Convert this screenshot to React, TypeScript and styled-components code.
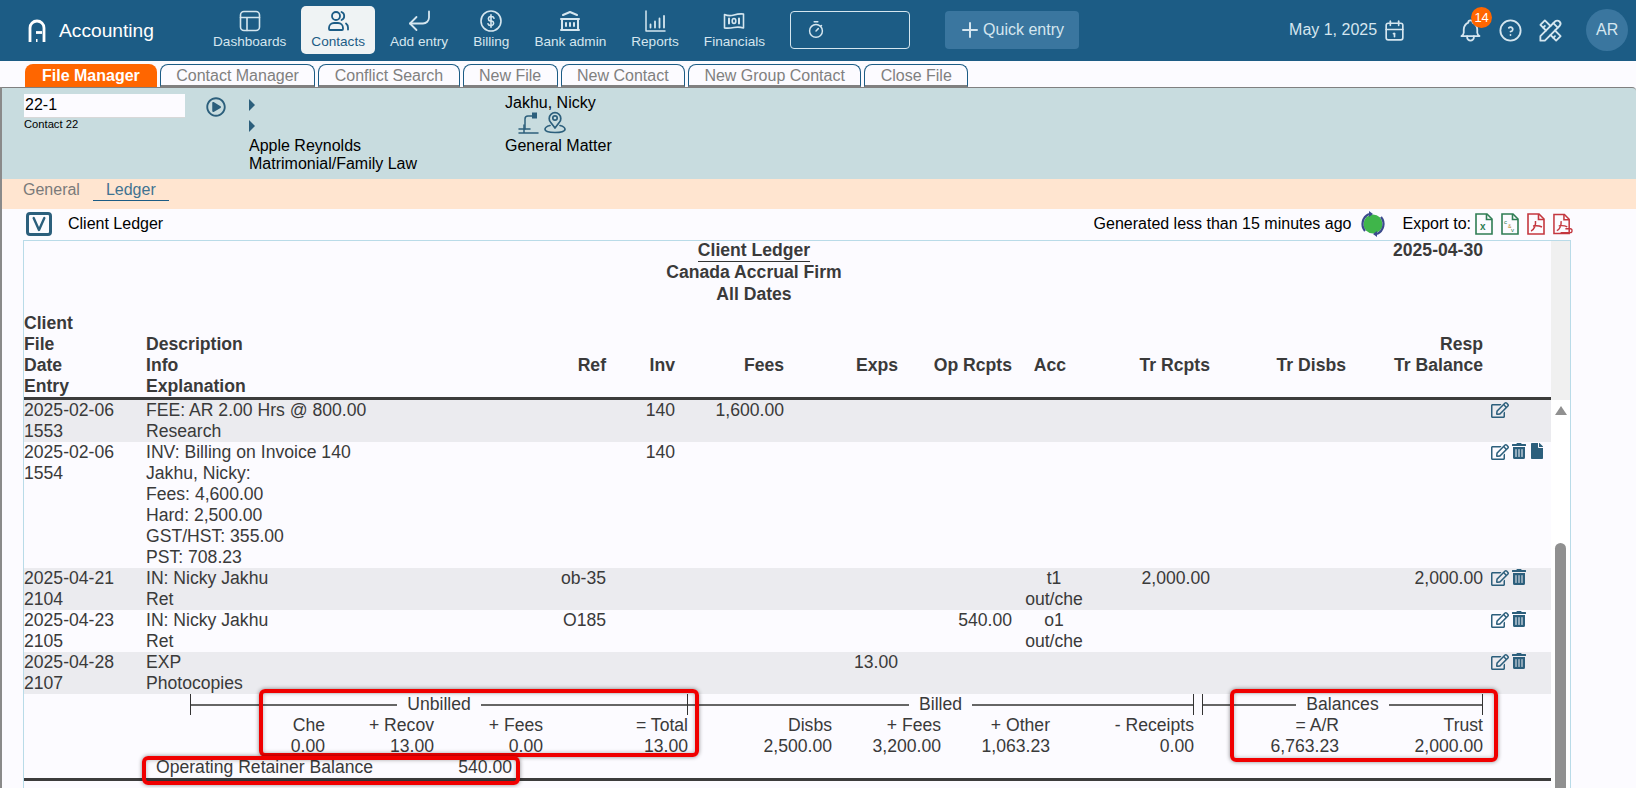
import React from 'react';
import styled, { createGlobalStyle } from 'styled-components';
import { FaRegEdit, FaTrashAlt, FaFile, FaRegPlayCircle } from 'react-icons/fa';
import { TbTools, TbBell, TbHelpCircle, TbCalendar, TbPlus, TbBuildingBank, TbStopwatch } from 'react-icons/tb';

const Global = createGlobalStyle`
  html, body { margin: 0; padding: 0; height: 788px; overflow: hidden; background: #fcfbff; }
  body { font-family: "Liberation Sans", Arial, sans-serif; font-size: 16px; color: #000; }
  * { box-sizing: border-box; }
`;

const Page = styled.div`
  position: relative;
  width: 1636px;
  height: 788px;
  overflow: hidden;
`;

/* ---------- header ---------- */
const Header = styled.header`
  height: 61px;
  background: #1c5c85;
  display: flex;
  align-items: center;
  color: #d5e6ef;
`;
const Brand = styled.div`
  width: 203px;
  display: flex;
  align-items: center;
  padding-left: 28px;
  gap: 13px;
  color: #fff;
  font-size: 19.2px;
`;
const Nav = styled.nav`
  display: flex;
  gap: 5px;
  margin-top: -1px;
`;
const NavItem = styled.div<{ $active?: boolean }>`
  height: 48px;
  padding: 3px 10px 0;
  border-radius: 5px;
  display: flex;
  flex-direction: column;
  align-items: center;
  font-size: 13.6px;
  line-height: 16px;
  white-space: nowrap;
  background: ${p => (p.$active ? '#eff3f4' : 'transparent')};
  color: ${p => (p.$active ? '#1c5c85' : '#d5e6ef')};
  svg { display: block; width: 24px; height: 24px; margin-bottom: 1px; }
`;
const TimerBox = styled.div`
  width: 120px;
  height: 38px;
  margin: -1px 0 0 15px;
  border: 1px solid #d5e6ef;
  border-radius: 4px;
  display: flex;
  align-items: center;
  padding-left: 14px;
  svg { width: 22px; height: 22px; stroke-width: 1.6; }
`;
const QuickEntry = styled.div`
  width: 134px;
  height: 38px;
  margin: -1px 0 0 35px;
  background: #3a769f;
  border-radius: 4px;
  display: flex;
  align-items: center;
  padding-left: 13px;
  gap: 1px;
  font-size: 16px;
  svg { width: 24px; height: 24px; }
`;
const RightTools = styled.div`
  margin-left: 210px;
  display: flex;
  align-items: center;
  font-size: 16px;
  margin-top: -1px;
`;
const DateIcon = styled.span`
  margin: 0 43px 0 5px;
  display: flex;
  svg { width: 25px; height: 25px; stroke-width: 1.6; }
`;
const ToolIcon = styled.span`
  position: relative;
  width: 40px;
  height: 28px;
  display: flex;
  justify-content: center;
  align-items: center;
  svg { width: 27px; height: 27px; stroke-width: 1.6; }
`;
const Badge = styled.span`
  position: absolute;
  top: -9px;
  left: 21px;
  width: 21px;
  height: 21px;
  border-radius: 50%;
  background: #ff6600;
  color: #fff;
  font-size: 13px;
  line-height: 21px;
  text-align: center;
`;
const Avatar = styled.div`
  width: 42px;
  height: 42px;
  margin-left: 16px;
  border-radius: 50%;
  background: #3a769f;
  color: #d5e6ef;
  font-size: 16px;
  line-height: 42px;
  text-align: center;
`;

/* ---------- tabs ---------- */
const Tabs = styled.div`
  height: 26px;
  padding: 3px 0 0 25px;
  display: flex;
  gap: 3px;
`;
const Tab = styled.div<{ $active?: boolean }>`
  height: 23px;
  padding: 0 ${p => (p.$active ? '17px' : '15.4px')};
  border-radius: 8px 8px 0 0;
  font-size: 16px;
  line-height: ${p => (p.$active ? '24px' : '22px')};
  white-space: nowrap;
  border: ${p => (p.$active ? 'none' : '1px solid #1c5c85')};
  border-bottom: ${p => (p.$active ? 'none' : '2px solid #808080')};
  background: ${p => (p.$active ? '#ff6600' : 'transparent')};
  color: ${p => (p.$active ? '#fff' : '#808080')};
  font-weight: ${p => (p.$active ? 700 : 400)};
`;

/* ---------- body wrapper ---------- */
const Body = styled.div`
  border-left: 2px solid #8a8a8a;
  height: 701px;
`;

const InfoPanel = styled.section`
  height: 92px;
  background: #c8dcdf;
  border-top: 1px solid #808080;
  border-top-right-radius: 4px;
  padding: 6px 0 0 22px;
  display: flex;
  font-size: 16px;
  line-height: 18px;
`;
const FileField = styled.div`
  width: 176px;
`;
const FileInput = styled.div`
  width: 161px;
  height: 24px;
  padding-left: 1px;
  background: #fcfbff;
  border-bottom: 1px solid #d8d8d8;
  line-height: 22px;
`;
const FileCaption = styled.div`
  font-size: 11.2px;
  line-height: 13px;
`;
const PlayCell = styled.div`
  width: 49px;
  padding: 3px 0 0 6px;
  color: #2c5f7c;
  svg { display: block; width: 20px; height: 20px; }
`;
const ClientCell = styled.div`
  width: 256px;
`;
const Caret = styled.div`
  width: 0;
  height: 0;
  margin: 5px 0 9px 0;
  border-left: 6px solid #2c5f7c;
  border-top: 6px solid transparent;
  border-bottom: 6px solid transparent;
`;
const ClientText = styled.div`
  margin-top: -4px;
`;
const MatterCell = styled.div`
  padding-top: 0;
`;
const MatterIcons = styled.div`
  display: flex;
  gap: 2px;
  margin: -1px 0 2px 12px;
  color: #2c5f7c;
  svg { display: block; width: 24px; height: 24px; }
`;

const SubTabs = styled.div`
  height: 30px;
  background: #ffe5d0;
  padding-left: 21px;
  display: flex;
  font-size: 16px;
  line-height: 21px;
`;
const PlainSubTab = styled.div`
  height: 22px;
  color: #7a7a7a;
`;
const ActiveSubTab = styled.div`
  height: 22px;
  padding: 0 13px;
  margin-left: 13px;
  color: #3f7391;
  border-bottom: 1px solid #1c5c85;
`;

const Toolbar = styled.div`
  height: 31px;
  padding: 0 0 2px 24px;
  display: flex;
  align-items: center;
  font-size: 16px;
`;
const Collapse = styled.div`
  width: 26px;
  height: 24px;
  border: 3px solid #2c5f7c;
  border-radius: 4px;
  color: #2c5f7c;
  display: flex;
  align-items: center;
  justify-content: center;
  margin-right: 16px;
  svg { width: 16px; height: 16px; }
`;
const ToolbarTitle = styled.div`
  flex: 1;
`;
const Refresh = styled.svg`
  width: 26px;
  height: 26px;
  margin: 0 17px 0 8px;
`;
const ExportIcons = styled.div`
  display: flex;
  gap: 8px;
  margin-left: 4px;
  margin-right: 63px;
  svg { display: block; height: 22px; }
`;

/* ---------- report ---------- */
const Frame = styled.div`
  margin-left: 21px;
  width: 1548px;
  border: 1px solid #b9dbe8;
  border-bottom: none;
  height: 560px;
  color: #3a3a3a;
  font-size: 17.6px;
  line-height: 21px;
`;
const TopPart = styled.div`
  display: flex;
  height: 159px;
`;
const HeadMain = styled.div`
  position: relative;
  width: 1527px;
`;
const Gutter = styled.div`
  flex: 1;
  background: #f0f0f0;
`;
const TitleBlock = styled.div`
  font-weight: 700;
  text-align: center;
  width: 1460px;
  height: 73px;
  margin-top: -1px;
`;
const TitleMain = styled.div`
  display: inline-block;
  border-bottom: 1px solid #333;
  line-height: 21px;
`;
const TitleLine = styled.div`
  line-height: 21.5px;
`;
const ReportDate = styled.div`
  position: absolute;
  top: -1px;
  right: 68px;
  font-weight: 700;
`;
const ColumnGrid = styled.div`
  display: grid;
  grid-template-columns: 122px 394px 66px 69px 109px 114px 114px 84px 114px 136px 137px 68px;
`;
const HeadRow = styled(ColumnGrid)`
  font-weight: 700;
  align-items: end;
  border-bottom: 3px solid #3c3c3c;
  height: 87px;
`;
const Right = styled.div`
  text-align: right;
`;
const HeadRight = styled(Right)`
  padding-bottom: 21px;
`;
const Center = styled.div`
  text-align: center;
`;
const AccHead = styled.div`
  text-align: center;
  padding: 0 8px 21px 0;
`;
const BottomPart = styled.div`
  display: flex;
`;
const Rows = styled.div`
  width: 1527px;
`;
const Row = styled(ColumnGrid)<{ $shade?: boolean }>`
  background: ${p => (p.$shade ? '#ebebef' : 'transparent')};
`;
const Actions = styled.div`
  padding: 1px 0 0 8px;
  display: flex;
  gap: 2px;
  color: #2c5f7c;
  align-items: flex-start;
  svg { display: block; }
`;
const Track = styled.div`
  flex: 1;
  background: #fff;
  padding-left: 4px;
`;
const UpArrow = styled.div`
  width: 0;
  height: 0;
  margin-top: 6px;
  border-left: 6px solid transparent;
  border-right: 6px solid transparent;
  border-bottom: 9px solid #909090;
`;
const Thumb = styled.div`
  width: 11px;
  height: 260px;
  margin-top: 128px;
  border-radius: 6px 6px 0 0;
  background: #909090;
`;
const SummaryGrid = styled.div`
  display: grid;
  grid-template-columns: 166px 135px 109px 109px 145px 144px 109px 109px 144px 8px 137px 144px;
`;
const Bracket = styled.div<{ $span: number; $left?: boolean }>`
  grid-column: span ${p => p.$span};
  display: flex;
  align-items: center;
  gap: 10px;
  border-right: 1px solid #333;
  border-left: ${p => (p.$left ? '1px solid #333' : 'none')};
  height: 21px;
  &::before, &::after {
    content: '';
    flex: 1;
    height: 2px;
    background: #666;
  }
`;
const RetainerRow = styled.div`
  margin-left: 132px;
  width: 356px;
  display: flex;
  justify-content: space-between;
`;
const EndRule = styled.div`
  height: 3px;
  background: #3c3c3c;
`;

const RedMark = styled.div<{ $x: number; $y: number; $w: number; $h: number }>`
  position: absolute;
  left: ${p => p.$x}px;
  top: ${p => p.$y}px;
  width: ${p => p.$w}px;
  height: ${p => p.$h}px;
  border: 4px solid #f00000;
  border-radius: 6px;
  box-shadow: 0 0 4px rgba(0, 0, 0, 0.45), inset 0 0 4px rgba(0, 0, 0, 0.3);
  pointer-events: none;
`;

/* ---------- drawings ---------- */
const Stroke = ({ children, vb = '0 0 24 24', sw = 1.6 }: { children: React.ReactNode; vb?: string; sw?: number }) => (
  <svg viewBox={vb} fill="none" stroke="currentColor" strokeWidth={sw} strokeLinecap="round" strokeLinejoin="round">
    {children}
  </svg>
);

const Logo = () => (
  <svg width="18" height="24" viewBox="0 0 18 24" fill="none" stroke="#fff" strokeWidth="2.800">
    <path d="M2 23V9a7 7 0 0 1 14 0v14" />
    <path d="M8 13.500h6" />
    <path d="M8 21.500h1.500" />
  </svg>
);
const DashboardsIcon = () => (
  <Stroke>
    <rect x="2.500" y="2.500" width="19" height="19" rx="3.500" />
    <path d="M2.500 8.500h19M9 8.500v13" />
  </Stroke>
);
const ContactsIcon = () => (
  <Stroke sw={1.8}>
    <circle cx="10" cy="7" r="4" />
    <path d="M3 20v-1a5 5 0 0 1 5-5h4a5 5 0 0 1 5 5v1q0 1-1 1H4q-1 0-1-1z" />
    <path d="M15.500 3a4.300 4.300 0 0 1 0 8" />
    <path d="M20 14.500a5 5 0 0 1 2 4v2" />
  </Stroke>
);
const AddEntryIcon = () => (
  <Stroke sw={1.8}>
    <path d="M22 2.500v6a6 6 0 0 1-6 6H3" />
    <path d="M9.500 8L3 14.500 9.500 21" />
  </Stroke>
);
const BillingIcon = () => (
  <Stroke>
    <circle cx="12" cy="12" r="10" />
    <path d="M15 9.200a2.400 2.400 0 0 0-2.400-1.700h-1.400a2.300 2.300 0 0 0 0 4.500h1.600a2.300 2.300 0 0 1 0 4.500h-1.400A2.400 2.400 0 0 1 9 14.800M12 5.800v12.400" />
  </Stroke>
);
const ReportsIcon = () => (
  <Stroke sw={1.5}>
    <path d="M3 2v20h19" />
    <path d="M7.500 18.500v-3M12 18.500v-6M16.500 18.500v-9M21 18.500V7" strokeWidth="1.800" />
  </Stroke>
);
const FinancialsIcon = () => (
  <Stroke sw={1.6}>
    <path d="M2.500 5.500q4.500 2 9.500.5t9.500-1v14q-4.500-1.500-9.500-.5t-9.500 .5z" />
    <ellipse cx="12" cy="12" rx="1.800" ry="2.500" />
    <path d="M7 9.500v5M17 9.500v5" strokeWidth="2" />
  </Stroke>
);
const TransferIcon = () => (
  <Stroke sw={1.500}>
    <path d="M8 18V8q0-3 3-3h7" />
    <path d="M15 1.500h5v6h-5z" fill="currentColor" stroke="none" />
    <path d="M2 18h11M7 14v8M2 22h19" />
  </Stroke>
);
const MapPinIcon = () => (
  <Stroke sw={1.700}>
    <circle cx="12" cy="7" r="2.200" />
    <path d="M12 17l-4.200-5.500a5.800 5.800 0 1 1 8.400 0z" />
    <path d="M7 14.500c-3 .8-5 2-5 3.800 0 2 4 3.200 10 3.200s10-1.200 10-3.200c0-1.800-2-3-5-3.800" />
  </Stroke>
);
const ChevronV = () => (
  <Stroke sw={3.600}>
    <path d="M4 3l8 18 8-18" />
  </Stroke>
);
const DocIcon = ({ color, children, wide }: { color: string; children: React.ReactNode; wide?: boolean }) => (
  <svg viewBox={wide ? '0 0 21 22' : '0 0 18 22'} width={wide ? 20 : 18} fill="none" stroke={color} strokeWidth="1.600">
    <path d="M1 1h11l5 5v15H1z" fill="#fcfbff" />
    <path d="M11.500 1v5.500H17" />
    {children}
  </svg>
);
const PdfMark = ({ color }: { color: string }) => (
  <path d="M4 18c3-1 5-6 4.500-10M6 13c3-.5 6-.5 9 1" stroke={color} strokeWidth="1.500" fill="none" />
);

const rows = [
  { shade: true, date: '2025-02-06', id: '1553', desc: ['FEE: AR 2.00 Hrs @ 800.00', 'Research'], inv: '140', fees: '1,600.00', icons: 1 },
  { date: '2025-02-06', id: '1554', desc: ['INV: Billing on Invoice 140', 'Jakhu, Nicky:', 'Fees: 4,600.00', 'Hard: 2,500.00', 'GST/HST: 355.00', 'PST: 708.23'], inv: '140', icons: 3 },
  { shade: true, date: '2025-04-21', id: '2104', desc: ['IN: Nicky Jakhu', 'Ret'], ref: 'ob-35', acc: ['t1', 'out/che'], tr: '2,000.00', bal: '2,000.00', icons: 2 },
  { date: '2025-04-23', id: '2105', desc: ['IN: Nicky Jakhu', 'Ret'], ref: 'O185', op: '540.00', acc: ['o1', 'out/che'], icons: 2 },
  { shade: true, date: '2025-04-28', id: '2107', desc: ['EXP', 'Photocopies'], exps: '13.00', icons: 2 },
];

const navItems = [
  { label: 'Dashboards', icon: <DashboardsIcon /> },
  { label: 'Contacts', icon: <ContactsIcon />, active: true },
  { label: 'Add entry', icon: <AddEntryIcon /> },
  { label: 'Billing', icon: <BillingIcon /> },
  { label: 'Bank admin', icon: <TbBuildingBank /> },
  { label: 'Reports', icon: <ReportsIcon /> },
  { label: 'Financials', icon: <FinancialsIcon /> },
];
const tabs = ['Contact Manager', 'Conflict Search', 'New File', 'New Contact', 'New Group Contact', 'Close File'];
const summary = [
  ['Che', '0.00'], ['+ Recov', '13.00'], ['+ Fees', '0.00'], ['= Total', '13.00'],
  ['Disbs', '2,500.00'], ['+ Fees', '3,200.00'], ['+ Other', '1,063.23'], ['- Receipts', '0.00'],
];
const balances = [['= A/R', '6,763.23'], ['Trust', '2,000.00']];

export default function App() {
  return (
    <Page>
      <Global />
      <Header>
        <Brand>
          <Logo />
          Accounting
        </Brand>
        <Nav>
          {navItems.map(n => (
            <NavItem key={n.label} $active={n.active}>
              {n.icon}
              {n.label}
            </NavItem>
          ))}
        </Nav>
        <TimerBox>
          <TbStopwatch />
        </TimerBox>
        <QuickEntry>
          <TbPlus />
          Quick entry
        </QuickEntry>
        <RightTools>
          May 1, 2025
          <DateIcon>
            <TbCalendar />
          </DateIcon>
          <ToolIcon>
            <TbBell />
            <Badge>14</Badge>
          </ToolIcon>
          <ToolIcon>
            <TbHelpCircle />
          </ToolIcon>
          <ToolIcon>
            <TbTools />
          </ToolIcon>
          <Avatar>AR</Avatar>
        </RightTools>
      </Header>

      <Tabs>
        <Tab $active>File Manager</Tab>
        {tabs.map(t => (
          <Tab key={t}>{t}</Tab>
        ))}
      </Tabs>

      <Body>
        <InfoPanel>
          <FileField>
            <FileInput>22-1</FileInput>
            <FileCaption>Contact 22</FileCaption>
          </FileField>
          <PlayCell>
            <FaRegPlayCircle />
          </PlayCell>
          <ClientCell>
            <Caret />
            <Caret />
            <ClientText>Apple Reynolds</ClientText>
            <div>Matrimonial/Family Law</div>
          </ClientCell>
          <MatterCell>
            <div>Jakhu, Nicky</div>
            <MatterIcons>
              <TransferIcon />
              <MapPinIcon />
            </MatterIcons>
            <div>General Matter</div>
          </MatterCell>
        </InfoPanel>

        <SubTabs>
          <PlainSubTab>General</PlainSubTab>
          <ActiveSubTab>Ledger</ActiveSubTab>
        </SubTabs>

        <Toolbar>
          <Collapse>
            <ChevronV />
          </Collapse>
          <ToolbarTitle>Client Ledger</ToolbarTitle>
          Generated less than 15 minutes ago
          <Refresh viewBox="0 0 26 26">
            <circle cx="13" cy="13" r="9.500" fill="#3fb54a" />
            <path d="M5 20A11 11 0 0 1 9 3" fill="none" stroke="#3b4a8c" strokeWidth="2.200" />
            <path d="M21 6a11 11 0 0 1-4 17" fill="none" stroke="#3b4a8c" strokeWidth="2.200" />
            <path d="M9 0v6l4-3zM17 26v-6l-4 3z" fill="#3b4a8c" />
          </Refresh>
          Export to:
          <ExportIcons>
            <DocIcon color="#2f7d54">
              <text x="5" y="17" fontSize="10" fontWeight="700" fill="#2f7d54" stroke="none" fontFamily="Liberation Sans">x</text>
            </DocIcon>
            <DocIcon color="#2f7d54">
              <text x="3" y="11" fontSize="6" fill="#2f7d54" stroke="none" fontFamily="Liberation Sans">c</text>
              <text x="7" y="14.500" fontSize="5" fill="#b58a2a" stroke="none" fontFamily="Liberation Sans">&amp;</text>
              <text x="10" y="19" fontSize="6" fill="#2f7d54" stroke="none" fontFamily="Liberation Sans">v</text>
            </DocIcon>
            <DocIcon color="#c4373f">
              <PdfMark color="#c4373f" />
            </DocIcon>
            <DocIcon color="#c4373f" wide>
              <PdfMark color="#c4373f" />
              <path d="M8 20h10q2 0 2-2t-2-2h-5" stroke="#c4373f" strokeWidth="1.400" />
            </DocIcon>
          </ExportIcons>
        </Toolbar>

        <Frame>
          <TopPart>
            <HeadMain>
              <TitleBlock>
                <TitleMain>Client Ledger</TitleMain>
                <TitleLine>Canada Accrual Firm</TitleLine>
                <TitleLine>All Dates</TitleLine>
              </TitleBlock>
              <ReportDate>2025-04-30</ReportDate>
              <HeadRow>
                <div>Client<br />File<br />Date<br />Entry</div>
                <div>Description<br />Info<br />Explanation</div>
                <HeadRight>Ref</HeadRight>
                <HeadRight>Inv</HeadRight>
                <HeadRight>Fees</HeadRight>
                <HeadRight>Exps</HeadRight>
                <HeadRight>Op Rcpts</HeadRight>
                <AccHead>Acc</AccHead>
                <HeadRight>Tr Rcpts</HeadRight>
                <HeadRight>Tr Disbs</HeadRight>
                <HeadRight>Resp<br />Tr Balance</HeadRight>
                <div />
              </HeadRow>
            </HeadMain>
            <Gutter />
          </TopPart>
          <BottomPart>
            <Rows>
              {rows.map(r => (
                <Row key={r.id} $shade={r.shade}>
                  <div>{r.date}<br />{r.id}</div>
                  <div>{r.desc.map(d => <div key={d}>{d}</div>)}</div>
                  <Right>{r.ref}</Right>
                  <Right>{r.inv}</Right>
                  <Right>{r.fees}</Right>
                  <Right>{r.exps}</Right>
                  <Right>{r.op}</Right>
                  <Center>{r.acc?.map(a => <div key={a}>{a}</div>)}</Center>
                  <Right>{r.tr}</Right>
                  <div />
                  <Right>{r.bal}</Right>
                  <Actions>
                    <FaRegEdit size={18} />
                    {r.icons > 1 && <FaTrashAlt size={16} />}
                    {r.icons > 2 && <FaFile size={16} />}
                  </Actions>
                </Row>
              ))}
              <SummaryGrid>
                <div />
                <Bracket $span={4} $left>Unbilled</Bracket>
                <Bracket $span={4}>Billed</Bracket>
                <div />
                <Bracket $span={2} $left>Balances</Bracket>
                <div />
                {summary.map(([h, v]) => (
                  <Right key={h + v}>{h}<br />{v}</Right>
                ))}
                <div />
                {balances.map(([h, v]) => (
                  <Right key={h}>{h}<br />{v}</Right>
                ))}
              </SummaryGrid>
              <RetainerRow>
                <span>Operating Retainer Balance</span>
                <span>540.00</span>
              </RetainerRow>
              <EndRule />
            </Rows>
            <Track>
              <UpArrow />
              <Thumb />
            </Track>
          </BottomPart>
        </Frame>
      </Body>

      <RedMark $x={259} $y={689} $w={440} $h={68} />
      <RedMark $x={142} $y={756} $w={378} $h={29} />
      <RedMark $x={1230} $y={689} $w={268} $h={73} />
    </Page>
  );
}
